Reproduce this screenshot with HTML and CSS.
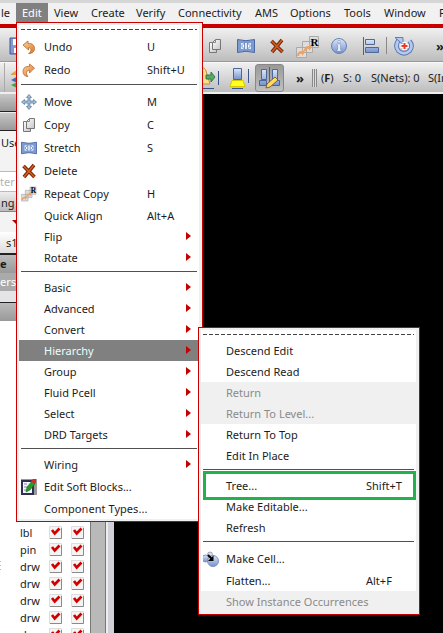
FILE: index.html
```html
<!DOCTYPE html>
<html lang="en"><head><meta charset="utf-8"><title>Layout Editor</title><link rel="stylesheet" href="styles.css"></head>
<body>
<svg class="defs" aria-hidden="true">
<defs>
<linearGradient id="or" x1="0" y1="0" x2="1" y2="1"><stop offset="0" stop-color="#ffd09a"/><stop offset="1" stop-color="#d87a2c"/></linearGradient>
<linearGradient id="bl" x1="0" y1="0" x2="0" y2="1"><stop offset="0" stop-color="#dce8fa"/><stop offset="1" stop-color="#7391cb"/></linearGradient>
<linearGradient id="gr" x1="0" y1="0" x2="1" y2="1"><stop offset="0" stop-color="#fff"/><stop offset="1" stop-color="#c4c4c4"/></linearGradient>
<symbol id="undo" viewBox="0 0 16 16"><path d="M2 6 7 2v2.500c4-.5 6.500 1.500 6.500 5 0 3-2 5-6 5 3-1.500 3.500-5.500 0-5.800V11z" fill="url(#or)" stroke="#b56a2c" stroke-width=".8"/></symbol>
<symbol id="redo" viewBox="0 0 16 16"><path d="M13.500 6 8.500 2v2.500C4.500 4 2 6 2 9.500 2 12.500 4 14.500 7 14.500 4.500 12 5 8.500 8.500 8.200V11z" fill="url(#or)" stroke="#b56a2c" stroke-width=".8"/></symbol>
<symbol id="move" viewBox="0 0 16 16"><path d="M8 .5 10.500 3.500H9V7h3.500V5.500L15.500 8l-3 2.500V9H9v3.500h1.500L8 15.500l-2.500-3H7V9H3.500v1.500L.5 8l3-2.500V7H7V3.500H5.500z" fill="#9fbbd8" stroke="#63809d" stroke-width=".8"/></symbol>
<symbol id="copy" viewBox="0 0 16 16"><path d="M2.500 4.500h7v10h-7z" fill="url(#gr)" stroke="#777"/><path d="M8.500 1.500h5v10h-8v-7z" fill="url(#gr)" stroke="#777"/><path d="M8.500 1.500v3h-3" fill="none" stroke="#888"/></symbol>
<symbol id="stretch" viewBox="0 0 18 14"><path d="M.5.5Q9 3 17.500.5v13Q9 11 .5 13.500z" fill="#7d9bd0" stroke="#4867a5"/><path d="M4 4h10v6H4z" fill="#dce9fc"/><path d="M7.500 4v6L4.500 7zM10.500 4v6l3-3z" fill="#fff" stroke="#5c7ab5" stroke-width=".8"/></symbol>
<symbol id="delete" viewBox="0 0 16 16"><path d="m2.500 3 11 11M13 2 3 14" stroke="#71260c" stroke-width="3.600"/><path d="m2.500 3 11 11M13 2 3 14" stroke="#d95a1c" stroke-width="1.700"/></symbol>
<symbol id="repeat" viewBox="0 0 24 24"><path d="M.5 12.500h10v10H.5zM6.500 6.500h10v11h-10zM13.500 1.500h9v11h-9z" fill="#ddd" stroke="#aaa"/><path d="M1 21q0-5 5-5v-2l3 3-3 4v-2q-3-1-3 2zM8 16q0-5 5-5V9l3 3-3 4v-2q-3-1-3 2z" fill="#eba266"/><text x="14.500" y="11" class="r-letter">R</text></symbol>
<symbol id="blocks" viewBox="0 0 16 16"><path d="M0 0h16v16H0z" fill="#999"/><path d="M1 2h11v13H1z" fill="#f5f5ff" stroke="#303052" stroke-width="2"/><path d="M3 5h3M3 8h3M3 11h3" stroke="#88a"/><path d="m5 13 1-5 5-6 3 3-5 6z" fill="#279b27" stroke="#076507" stroke-width=".5"/><path d="m10 2 2-2h3v4l-2 1z" fill="#d9272e"/></symbol>
<symbol id="cell" viewBox="0 0 16 16"><circle cx="7" cy="3.500" r="2.500" fill="#ddd" stroke="#9aa6c4"/><circle cx="2.500" cy="7.500" r="3.500" fill="url(#bl)" stroke="#8492ba"/><circle cx="10" cy="10" r="5.500" fill="url(#bl)" stroke="#8492ba"/><path d="m5 4 4 4" stroke="#000" stroke-width="2"/><path d="M10.500 4.500V10H5z"/></symbol>
<symbol id="info" viewBox="0 0 18 18"><circle cx="9" cy="9" r="7.500" fill="url(#bl)" stroke="#6581b8"/><path d="M8 3.500h2.200v2.200H8zM7 7h3.200v5.500h1V14H7v-1.500h1v-4H7z" fill="#fff" stroke="#6c82ae" stroke-width=".5"/></symbol>
<symbol id="align" viewBox="0 0 18 18"><path d="M1.500 0v18" stroke="#bd3543"/><path d="M3.500 2.500h9v5h-9zM3.500 10.500h13v5h-13z" fill="url(#bl)" stroke="#4e6898"/></symbol>
<symbol id="rotate" viewBox="0 0 20 20"><path d="M4.500 4q-4 6.500 0 11 5.500 4.500 11 0 4-5 0-10" fill="none" stroke="#5773b0" stroke-width="4.600"/><path d="M4.500 4q-4 6.500 0 11 5.500 4.500 11 0 4-5 0-10" fill="none" stroke="#b5c9ed" stroke-width="2.800"/><path d="M1 1.500h8v7z" fill="#b5c9ed" stroke="#5773b0" stroke-width=".9"/><path d="M10.500 6v8M6.500 10h8" stroke="#fff" stroke-width="4"/><path d="M10.500 7v6M7.500 10h6" stroke="#e8392b" stroke-width="2"/></symbol>
<symbol id="check" viewBox="0 0 13 13"><path d="M.5.5h12v12H.5z" fill="#f4f4f4" stroke="#ddd"/><path d="M1 12.500h11.500V2" fill="none" stroke="#8a8a8a"/><path d="M3 4 5.700 7.500 10.500 2.500" fill="none" stroke="#d00000" stroke-width="2.700"/></symbol>
</defs></svg>
<div class="app">
<nav class="menubar"><span>le</span><span class="active">Edit</span><span>View</span><span>Create</span><span>Verify</span><span>Connectivity</span><span>AMS</span><span>Options</span><span>Tools</span><span>Window</span><span>F</span></nav>
<div class="toolbar one">
<svg class="save" viewBox="0 0 8 18"><path d="M1 1h7v16H1z" fill="#8499ce" stroke="#4055a0"/><path d="M4 2h4v6H4zM5 11h3v5H5z" fill="#fff"/></svg>
<svg class="i16"><use href="#copy"/></svg><svg class="i18"><use href="#stretch"/></svg><svg class="i16 del"><use href="#delete"/></svg><svg class="i24"><use href="#repeat"/></svg><svg class="i18 inf"><use href="#info"/></svg><svg class="i18 al"><use href="#align"/></svg><i class="divider"></i><svg class="i20"><use href="#rotate"/></svg><b class="more">»</b>
</div>
<div class="toolbar two">
<i class="lefttool"></i><svg class="layers" viewBox="0 0 12 20"><path d="m0 6 9-6v7H0z" fill="#e3a13b"/><path d="m0 12 9-5 3 5-6 3z" fill="#456bb8"/><path d="m0 17 9-4 3 4-6 3z" fill="#38a647"/></svg>
<svg class="probe" viewBox="0 0 20 24"><path d="M0 2q4-1 5 3l4 13H0z" fill="#ffe08a" stroke="#d08a35"/><path d="M5 9h5V6l4 5-4 5v-3H5z" fill="#5aa867" stroke="#337a45"/><path d="M17.500 5v14M0 22.500h13" stroke="#34508a"/></svg>
<svg class="highlight" viewBox="0 0 22 22"><path d="M4.500 1.500h8v11h-8z" fill="url(#bl)" stroke="#4c6697"/><path d="M3 13.500h11l2 6H1z" fill="#ffff20" stroke="#d8c800"/><path d="M19.500 2v14M3 21.500h11" stroke="#3c568b"/></svg>
<span class="pressed"><svg viewBox="0 0 24 22"><path d="M3.500 2.500h5v10h-5zM14.500 2.500h5v10h-5zM1.500 13.500h7v5h-7zM14.500 13.500h7v5h-7z" fill="url(#bl)" stroke="#4c6697"/><path d="M11.500 0v18" stroke="#d12c35"/><path d="m8 21 1-4 8-7 3 3-8 7z" fill="#ffdb5c" stroke="#734628" stroke-width=".8"/></svg></span>
<b class="more2">»</b><i class="grip"></i><span class="f">(<b>F</b>)</span><span class="s">S: 0</span><span class="nets">S(Nets): 0</span><span class="ins">S(In</span>
</div>
<main>
<aside>
<div class="bar a"></div><div class="bar b"></div><div class="used">Use</div><div class="filter">ter</div><div class="tab">ng</div><div class="tri"><i></i></div><div class="s1">s1</div><div class="pal"><b>e</b></div><div class="layersTitle">ers</div><div class="blank"></div><div class="head"></div>
<div class="list">
<div><span>lbl</span><svg><use href="#check"/></svg><svg><use href="#check"/></svg></div>
<div><span>pin</span><svg><use href="#check"/></svg><svg><use href="#check"/></svg></div>
<div class="dots"><span>drw</span><svg><use href="#check"/></svg><svg><use href="#check"/></svg></div>
<div><span>drw</span><svg><use href="#check"/></svg><svg><use href="#check"/></svg></div>
<div><span>drw</span><svg><use href="#check"/></svg><svg><use href="#check"/></svg></div>
<div><span>drw</span><svg><use href="#check"/></svg><svg><use href="#check"/></svg></div>
<div><span>drw</span><svg><use href="#check"/></svg><svg><use href="#check"/></svg></div>
</div>
</aside><div class="scroll"></div><div class="split"></div><section class="canvas"></section>
</main>
</div>
<div class="menu edit">
<div class="tear"></div>
<div class="row ic"><svg><use href="#undo"/></svg><span>Undo</span><kbd>U</kbd></div>
<div class="row ic"><svg><use href="#redo"/></svg><span>Redo</span><kbd>Shift+U</kbd></div>
<div class="sep"></div>
<div class="row ic"><svg><use href="#move"/></svg><span>Move</span><kbd>M</kbd></div>
<div class="row ic"><svg><use href="#copy"/></svg><span>Copy</span><kbd>C</kbd></div>
<div class="row ic"><svg><use href="#stretch"/></svg><span>Stretch</span><kbd>S</kbd></div>
<div class="row ic"><svg><use href="#delete"/></svg><span>Delete</span></div>
<div class="row ic"><svg><use href="#repeat"/></svg><span>Repeat Copy</span><kbd>H</kbd></div>
<div class="row"><span>Quick Align</span><kbd>Alt+A</kbd></div>
<div class="row sub"><span>Flip</span></div>
<div class="row sub"><span>Rotate</span></div>
<div class="sep"></div>
<div class="row sub"><span>Basic</span></div>
<div class="row sub"><span>Advanced</span></div>
<div class="row sub"><span>Convert</span></div>
<div class="row sub hot"><span>Hierarchy</span></div>
<div class="row sub"><span>Group</span></div>
<div class="row sub"><span>Fluid Pcell</span></div>
<div class="row sub"><span>Select</span></div>
<div class="row sub"><span>DRD Targets</span></div>
<div class="sep"></div>
<div class="row sub"><span>Wiring</span></div>
<div class="row ic"><svg><use href="#blocks"/></svg><span>Edit Soft Blocks...</span></div>
<div class="row"><span class="wide">Component Types...</span></div>
</div>
<div class="menu hier">
<div class="tear"></div>
<div class="row"><span>Descend Edit</span></div>
<div class="row"><span>Descend Read</span></div>
<div class="row off"><span>Return</span></div>
<div class="row off"><span>Return To Level...</span></div>
<div class="row"><span>Return To Top</span></div>
<div class="row"><span>Edit In Place</span></div>
<div class="sep"></div>
<div class="row tree"><span>Tree...</span><kbd>Shift+T</kbd></div>
<div class="row"><span>Make Editable...</span></div>
<div class="row"><span>Refresh</span></div>
<div class="sep"></div>
<div class="row ic"><svg><use href="#cell"/></svg><span>Make Cell...</span></div>
<div class="row"><span>Flatten...</span><kbd>Alt+F</kbd></div>
<div class="row off"><span>Show Instance Occurrences</span></div>
</div>
</body></html>
```
FILE: styles.css
```css
*{box-sizing:border-box}
body{margin:0;width:443px;height:633px;overflow:hidden;font:11px "Noto Sans","Open Sans",sans-serif;color:#1c1c1c;position:relative}
svg{display:block;flex:none}
.defs{position:absolute;width:0;height:0}
.r-letter{font:bold 11px "Liberation Serif",serif}
.app{display:flex;flex-direction:column;height:633px}
.menubar{flex:none;height:28px;border-top:3px solid #d6d6d6;border-bottom:4px solid #c80000;background:#f1f1f1;display:grid;grid-template-columns:16px 32px 37px 45px 42px 77px 35px 54px 40px 56px 9px;line-height:20px;white-space:nowrap;overflow:hidden}
.menubar span{padding-left:6px;height:19px}
.menubar span:last-child{padding-left:5px}
.menubar span:first-child{padding-left:1px}
.menubar .active{background:#808080;color:#fff}
.toolbar{display:flex;align-items:center;flex:none;background:linear-gradient(#f0f0f0,#bdbdbd);white-space:nowrap;overflow:hidden}
.toolbar>*{flex:none}
.one{height:34px;border-bottom:1px solid #999;padding:2px 0 0 9px}
.save{width:8px;height:18px}
.i16{width:16px;height:16px;margin-left:190px}
.i18{width:18px;height:14px;margin-left:14px}
.i16.del{margin-left:14px;width:16px}
.i24{width:24px;height:24px;margin:2px 0 0 11px}
.i18.inf{margin-left:10px;height:18px}
.i18.al{margin-left:14px;height:18px}
.divider{width:1px;height:17px;background:#888;margin-left:6px}
.i20{width:20px;height:20px;margin-left:7px}
.more{font-size:13px;line-height:16px;margin-left:22px}
.two{height:30px;border-top:1px solid #f8f8f8}
.lefttool{width:5px;height:29px;border-right:1px solid #aaa}
.layers{width:12px;height:20px;margin-left:6px}
.probe{width:20px;height:24px;margin-left:178px}
.highlight{width:22px;height:22px;margin-left:8px}
.pressed{width:29px;height:28px;background:linear-gradient(#999,#c0c0c0);border:1px solid #888;border-radius:3px;margin-left:4px;padding:2px 2px}
.pressed svg{width:24px;height:22px}
.more2{width:9px;font-size:13px;line-height:16px;margin-left:12px}
.grip{width:5px;height:18px;margin-left:7px;background:repeating-linear-gradient(90deg,#888 0 1px,#ddd 1px 2px)}
.f{width:22px;margin-left:4px}.s{width:28px}.nets{width:57px}
main{display:flex;flex:1;border-top:2px solid #eee;min-height:0}
aside{width:90px;background:#fff;flex:none;overflow:hidden}
.bar{height:18px;background:linear-gradient(#c7c7c7,#999);border-bottom:1px solid #222}
.bar.b{height:19px;border-top:1px solid #eee}
.used{height:40px;background:#f3f3f3;padding-left:1px;line-height:24px}
.filter{height:21px;background:#fff;border:1px solid #bbb;border-left:0;color:#b4b4b4;line-height:19px}
.tab{height:20px;background:linear-gradient(#eee,#bbb);padding-left:1px;line-height:21px;border-bottom:1px solid #888}
.tri{height:20px;background:#f3f3f3;padding:8px 0 0 12px}
.tri i{display:block;width:8px;border:4px solid transparent;border-top-color:#b00000}
.s1{height:23px;background:linear-gradient(#fff,#ddd);border-bottom:2px solid #222;padding-left:6px;line-height:22px}
.pal{height:18px;background:linear-gradient(#bbb,#999);line-height:18px}
.layersTitle{height:18px;background:#aaa;color:#fff;line-height:17px}
.blank{height:12px;background:#e4e4e7;border-bottom:1px solid #222}
.head{height:18px;background:linear-gradient(#bbb,#999)}
.list{padding-top:203px}
.list div{height:17px;display:flex;align-items:center;padding-left:20px}
.list .dots{background:repeating-linear-gradient(#bbb 0 1px,transparent 1px 4px) 0 3px/1px 10px no-repeat}
.list span{width:29px;flex:none}
.list svg{width:13px;height:13px;margin-right:9px}
.scroll{width:16px;background:#b9b9b9;border:solid #777;border-width:0 1px}
.split{width:8px;background:#d0d0d6;border-left:2px solid #eee}
.canvas{flex:1;background:#000}
.menu{position:absolute;border:1px solid #c80000;background:#fff}
.edit{left:16px;top:22px;width:187px;height:500px;box-shadow:inset 2px 2px #f0f0f0,inset -3px -2px #f0f0f0}
.hier{left:198px;top:327px;width:222px;height:288px;box-shadow:inset 2px 2px #f0f0f0,inset -3px -2px #f0f0f0}
.tear{height:12px;padding:6px 5px 0 4px}
.tear:before{content:"";display:block;height:1px;background:repeating-linear-gradient(90deg,#444 0 4px,transparent 4px 6px)}
.sep{height:9px;padding:3px 5px 0 4px}
.sep:before{content:"";display:block;height:1px;background:#505050}
.row{height:21px;margin:0 3px 0 2px;display:grid;grid-template-columns:25px 103px 1fr;align-items:center;white-space:nowrap;line-height:20px}
.row.ic{height:23px}
.row svg{width:16px;height:16px;margin-left:2px}
.row span{grid-column:2}
.row .wide{letter-spacing:.05px}
.row kbd{font:inherit;grid-column:3}
.hier .row{grid-template-columns:25px 140px 1fr}
.sub:after{content:"";grid-column:3;width:0;height:0;margin:-2px 0 0 39px;border:4.5px solid transparent;border-left:5px solid #c40000;border-right:0}
.hot{background:#808080;color:#e8ffff}
.off{background:#f0f0f0;color:#8a8a8a}
.tree{position:relative}
.tree:before{content:"";position:absolute;left:2px;right:0;top:-4px;bottom:-4px;border:3px solid #22b14c}
```
